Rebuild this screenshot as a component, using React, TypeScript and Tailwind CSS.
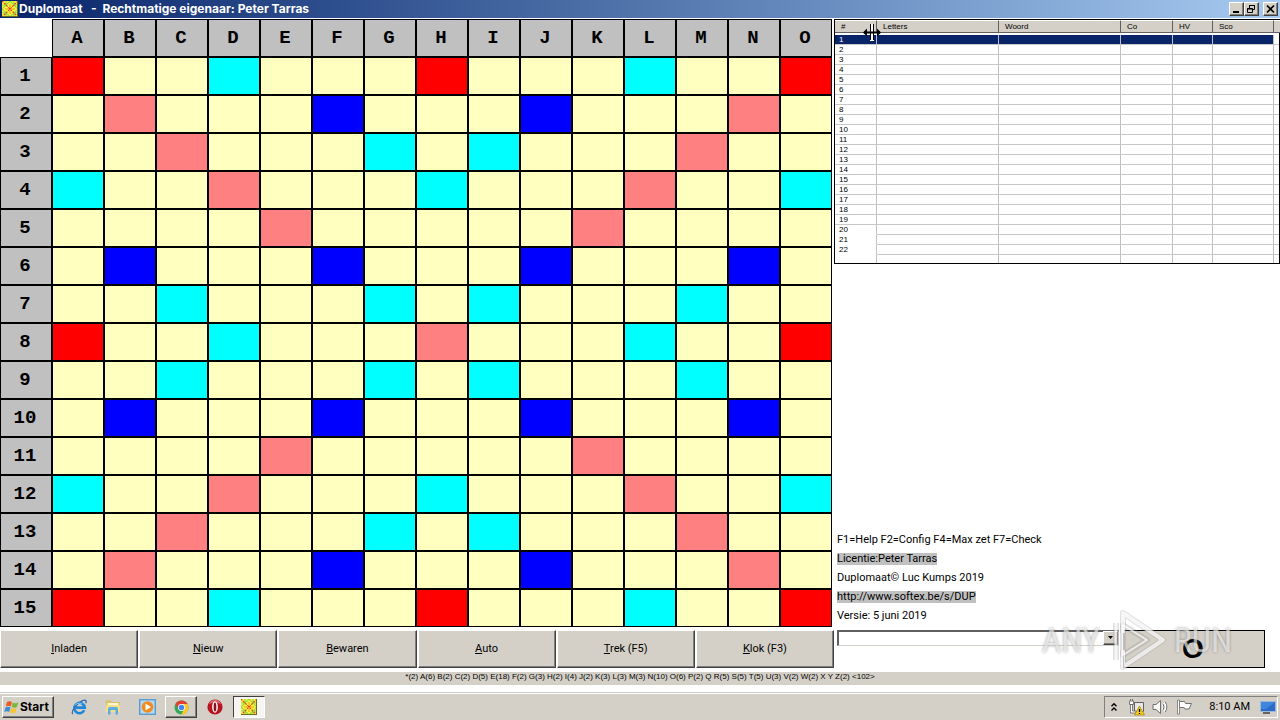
import React from "react";

const COLUMNS = "ABCDEFGHIJKLMNO".split("");

// r = triple word, p = double word, b = triple letter, c = double letter
const BOARD = [
  "r..c...r...c..r",
  ".p...b...b...p.",
  "..p...c.c...p..",
  "c..p...c...p..c",
  "....p.....p....",
  ".b...b...b...b.",
  "..c...c.c...c..",
  "r..c...p...c..r",
  "..c...c.c...c..",
  ".b...b...b...b.",
  "....p.....p....",
  "c..p...c...p..c",
  "..p...c.c...p..",
  ".p...b...b...p.",
  "r..c...r...c..r",
];

const SQUARE: Record<string, string> = {
  r: "bg-[#ff0000]",
  p: "bg-[#ff8080]",
  b: "bg-[#0000ff]",
  c: "bg-[#00ffff]",
  ".": "bg-[#ffffc0]",
};

const LIST_COLUMNS = [
  { title: "#", width: "w-[42px]" },
  { title: "Letters", width: "w-[122px]" },
  { title: "Woord", width: "w-[122px]" },
  { title: "Co", width: "w-[52px]" },
  { title: "HV", width: "w-[40px]" },
  { title: "Sco", width: "w-[61px]" },
  { title: "", width: "" },
];

const ACTIONS = [
  ["I", "nladen"],
  ["N", "ieuw"],
  ["B", "ewaren"],
  ["A", "uto"],
  ["T", "rek (F5)"],
  ["K", "lok (F3)"],
];

const RAISED =
  "border border-t-white border-l-white border-r-[#404040] border-b-[#404040] bg-[#d4d0c8] shadow-[inset_-1px_-1px_0_#808080]";

function AppIcon() {
  return (
    <svg width="16" height="16" viewBox="0 0 16 16" aria-hidden="true">
      <rect width="16" height="16" fill="#f6f63a" />
      <path d="M0 8l8-8 8 8-8 8zM4 0v4H0M12 0v4h4M4 16v-4H0M12 16v-4h4" fill="none" stroke="#98d848" strokeWidth="1.200" />
      <path d="M0 0l16 16M16 0L0 16" stroke="#e8401c" strokeWidth="1.300" strokeDasharray="2 1" />
      <path d="M8 3v3M8 10v3M3 8h3M10 8h3" stroke="#e89a28" strokeWidth="1" />
      <path d="M0 15.500h16M15.500 0v16" stroke="#6b6b20" strokeWidth="1" />
    </svg>
  );
}

function TitleBar() {
  const control = `flex h-[14px] w-[15px] items-center justify-center ${RAISED}`;
  return (
    <header className="flex h-[18px] items-center bg-linear-to-r from-[#0a246a] to-[#a6caf0] pr-[2px] pl-[2px]">
      <AppIcon />
      <h1 className="ml-[1px] flex-1 font-['Inter',sans-serif] text-[12px] leading-[16px] font-bold whitespace-pre text-white">
        {"Duplomaat   -  Rechtmatige eigenaar: Peter Tarras"}
      </h1>
      <button aria-label="Minimize" className={control}>
        <svg width="11" height="10" viewBox="0 0 11 10"><path d="M2 8h6" stroke="#000" strokeWidth="2" /></svg>
      </button>
      <button aria-label="Restore" className={control}>
        <svg width="11" height="10" viewBox="0 0 11 10" fill="none" stroke="#000">
          <path d="M3.500 4V1.500h5v4H7M3 1.500h6M1.500 4.500h5v4h-5zM1 5h6" />
        </svg>
      </button>
      <button aria-label="Close" className={`ml-[4px] ${control}`}>
        <svg width="11" height="10" viewBox="0 0 11 10"><path d="M2 1.500l7 7M9 1.500l-7 7" stroke="#000" strokeWidth="1.700" /></svg>
      </button>
    </header>
  );
}

function Board() {
  const heading = "h-[38px] border border-black bg-[#c0c0c0] p-0 pr-[2px] pb-[1px] text-center align-middle";
  return (
    <table className="w-full table-fixed border-separate border-spacing-0 font-['Liberation_Mono',monospace] text-[19px] leading-[20px] font-bold text-black">
      <thead>
        <tr>
          <td className="h-[38px] p-0" />
          {COLUMNS.map((c) => (
            <th key={c} scope="col" className={heading}>{c}</th>
          ))}
        </tr>
      </thead>
      <tbody>
        {BOARD.map((row, r) => (
          <tr key={r}>
            <th scope="row" className={heading}>{r + 1}</th>
            {row.split("").map((s, c) => (
              <td key={c} className={`h-[38px] border border-black p-0 ${SQUARE[s]}`} />
            ))}
          </tr>
        ))}
      </tbody>
    </table>
  );
}

function MoveList() {
  const rows = Array.from({ length: 22 }, (_, i) => i + 1);
  return (
    <div className="relative border border-black bg-white">
      <table className="w-full table-fixed border-separate border-spacing-0 font-['Liberation_Sans',sans-serif] text-[8px] text-black">
        <thead>
          <tr>
            {LIST_COLUMNS.map((c, i) => (
              <th key={i} scope="col" className={`h-[15px] border-b-2 border-b-white p-0 text-left font-normal ${c.width}`}>
                <div className="h-[13px] border-t border-r border-b border-t-white border-r-[#606060] border-b-[#606060] bg-[#d4d0c8] pl-[6px] leading-[11px]">
                  {c.title}
                </div>
              </th>
            ))}
          </tr>
        </thead>
        <tbody>
          {rows.map((n) => (
            <tr key={n}>
              {LIST_COLUMNS.map((_, i) => {
                const line = i === 0 && n > 19 ? "border-b-white" : "border-b-[#c8c8c8]";
                const fill = n === 1 && i < 6 ? "bg-[#0a246a] text-white" : "";
                const edge = i < 6 ? "border-r border-r-[#c0c0c0]" : "";
                return (
                  <td key={i} className={`h-[10px] border-b p-0 pl-[4px] leading-[9px] ${line} ${fill} ${edge}`}>
                    {i === 0 ? n : null}
                  </td>
                );
              })}
            </tr>
          ))}
          <tr>
            {LIST_COLUMNS.map((_, i) => (
              <td key={i} className={`h-[8px] p-0 ${i < 6 ? "border-r border-r-[#c0c0c0]" : ""}`} />
            ))}
          </tr>
        </tbody>
      </table>
      <svg className="pointer-events-none absolute top-[3px] left-[28px]" width="18" height="20" viewBox="0 0 18 20" aria-hidden="true">
        <path d="M7 1h4v17H7z" fill="#fff" />
        <path d="M7.500 1v16M10.500 1v16" stroke="#000" strokeWidth="1" />
        <path d="M1 9.500h16" stroke="#000" strokeWidth="2" />
        <path d="M0 9.500L4 5.500v8zM18 9.500l-4-4v8z" fill="#000" />
      </svg>
    </div>
  );
}

function Info() {
  return (
    <div className="flex flex-col items-start gap-[7px] pl-[3px] text-[11px] leading-[12px] text-black">
      <p>F1=Help F2=Config F4=Max zet F7=Check</p>
      <p className="bg-[#c0c0c0]">Licentie:Peter Tarras</p>
      <p>Duplomaat© Luc Kumps 2019</p>
      <a href="http://www.softex.be/s/DUP" className="bg-[#c0c0c0]">http://www.softex.be/s/DUP</a>
      <p>Versie: 5 juni 2019</p>
    </div>
  );
}

function Watermark() {
  const word =
    "font-['Roboto_Condensed','Liberation_Sans_Narrow',Roboto,sans-serif] text-[34px] leading-[34px] text-white/60 [text-shadow:0_0_3px_rgba(100,100,100,0.6)]";
  return (
    <div className="pointer-events-none absolute -top-[22px] right-[48px] flex items-center gap-[8px]" aria-hidden="true">
      <span className={word}>ANY</span>
      <svg width="58" height="64" viewBox="0 0 58 64" fill="none" strokeLinejoin="round">
        <g stroke="#8c8c8c" strokeOpacity=".28" strokeWidth="6">
          <path d="M15 25V5l40 27-40 27V42" />
          <path d="M15 17v30l24-15z" />
          <path d="M8 15v37" />
        </g>
        <g stroke="#fff" strokeOpacity=".7" strokeWidth="4">
          <path d="M15 25V5l40 27-40 27V42" />
          <path d="M15 17v30l24-15z" strokeWidth="2" />
          <path d="M8 15v37" strokeWidth="3" />
        </g>
      </svg>
      <span className={word}>RUN</span>
    </div>
  );
}

function EntryRow() {
  return (
    <div className="relative flex h-[38px] items-start gap-[4px] pr-[15px] pl-[3px]">
      <div className="relative flex-1">
        <select
          aria-label="Woord"
          className="block h-[16px] w-full appearance-none border border-t-2 border-l-2 border-t-[#606060] border-r-[#d4d0c8] border-b-[#d4d0c8] border-l-[#606060] bg-white text-[11px]"
        >
          <option></option>
        </select>
        <span className={`pointer-events-none absolute top-[1px] right-[1px] flex h-[14px] w-[15px] items-center justify-center ${RAISED}`}>
          <svg width="7" height="4" viewBox="0 0 7 4"><path d="M1 0h5L3.500 3z" fill="#000" /></svg>
        </span>
      </div>
      <button className="h-[38px] w-[142px] border border-black bg-[#d4d0c8] pr-[2px] font-['Liberation_Sans',sans-serif] text-[28px] leading-[32px] font-bold text-black">
        O
      </button>
      <Watermark />
    </div>
  );
}

function IeIcon() {
  return (
    <svg width="17" height="16" viewBox="0 0 17 16" fill="none">
      <path d="M13.200 11.300A5.200 5.200 0 1 1 13.700 8.600H5" stroke="#1c86d8" strokeWidth="2.600" />
      <path d="M1.800 15C-.5 12.500 6 4 11.500 1.600c3.500-1.400 4.200.2 3.200 2.600" stroke="#2b6cb8" strokeWidth="1.300" />
      <path d="M4 6.500a5 5 0 0 1 7-1.600" stroke="#8fd3f8" strokeWidth="1" />
    </svg>
  );
}

function FolderIcon() {
  return (
    <svg width="16" height="16" viewBox="0 0 16 16">
      <path d="M1 1.500h5l1 1.500h8v10H1z" fill="#dcc068" />
      <path d="M2.500 4h11v5h-11z" fill="#fff7d0" />
      <path d="M1 6h14v7H1z" fill="#f4de8c" />
      <path d="M3 15.500V10q0-2 2-2h6q2 0 2 2v5.500h-2.500V11h-5v4.500z" fill="#58aee0" />
    </svg>
  );
}

function PlayerIcon() {
  return (
    <svg width="17" height="16" viewBox="0 0 17 16">
      <rect x=".7" y=".7" width="15.600" height="14.600" fill="#b4d8f4" stroke="#5a9cd0" strokeWidth="1.400" />
      <circle cx="8.500" cy="8" r="5.800" fill="#f48a1c" />
      <path d="M6.500 4.500l5.500 3.500-5.500 3.500z" fill="#fff" />
    </svg>
  );
}

function ChromeIcon() {
  return (
    <svg width="15" height="15" viewBox="0 0 16 16">
      <circle cx="8" cy="8" r="7.500" fill="#34a853" />
      <path d="M1.500 4.250A7.500 7.500 0 0 1 14.500 4.250L8 5 5 9.800z" fill="#e04030" />
      <path d="M14.500 4.250A7.500 7.500 0 0 1 7.600 15.500L11 9.700 8 4.300z" fill="#fbc82c" />
      <circle cx="8" cy="8" r="3.700" fill="#fff" />
      <circle cx="8" cy="8" r="2.900" fill="#4285f4" />
    </svg>
  );
}

function OperaIcon() {
  return (
    <svg width="16" height="16" viewBox="0 0 16 16">
      <circle cx="8" cy="8" r="7.600" fill="#b81420" />
      <path d="M2 5a6.500 6.500 0 0 1 12 0q-6-3-12 0z" fill="#dc6a6a" />
      <ellipse cx="8" cy="8" rx="2.900" ry="5.800" fill="#f6f0f0" />
      <ellipse cx="8" cy="8" rx="1.300" ry="4.600" fill="#8c1018" />
    </svg>
  );
}

function Taskbar() {
  const slot = "flex h-[22px] w-8 items-center justify-center";
  return (
    <footer className="mt-[7px] border-t border-[#c8c8c8] font-['Roboto',sans-serif]">
      <div className="flex items-center border-t border-white bg-[#d4d0c8] px-[2px] pt-[2px] pb-[2px]">
        <button className={`flex h-[22px] w-[52px] items-center pl-[1px] font-['Inter',sans-serif] text-[12px] leading-[18px] font-bold text-black ${RAISED}`}>
          <svg width="16" height="16" viewBox="0 0 16 16" className="shrink-0" aria-hidden="true">
            <path d="M3 3q2.500-1.700 5 0L6.800 7.500q-2.500-1.500-5 0z" fill="#ec5a24" />
            <path d="M8.800 3.500q2.500 1.400 5.500-.2L13 8q-2.500 1.400-5.300 0z" fill="#7cb83c" />
            <path d="M1.500 8.500q2.500-1.500 5 0L5.200 13q-2.500-1.500-5 0z" fill="#3c8cd8" />
            <path d="M7.400 9q2.500 1.400 5.300 0l-1.300 4.600q-2.600 1.400-5.300 0z" fill="#f8c42c" />
          </svg>
          Start
        </button>
        <nav aria-label="Taskbar" className="ml-[9px] flex flex-1 gap-[2px]">
          <button aria-label="Internet Explorer" className={slot}><IeIcon /></button>
          <button aria-label="Windows Explorer" className={slot}><FolderIcon /></button>
          <button aria-label="Media Player" className={slot}><PlayerIcon /></button>
          <button aria-label="Chrome" className={`${slot} ${RAISED}`}><ChromeIcon /></button>
          <button aria-label="Opera" className={slot}><OperaIcon /></button>
          <button aria-label="Duplomaat" className={`${slot} border border-t-[#404040] border-r-white border-b-white border-l-[#404040] bg-[#f6f5f2]`}>
            <AppIcon />
          </button>
        </nav>
        <div className="flex h-[22px] items-center border border-t-[#808080] border-r-white border-b-white border-l-[#808080] pr-[1px] pl-[5px] text-[11px] leading-[14px] text-black">
          <svg width="8" height="10" viewBox="0 0 8 10" fill="none" stroke="#000" strokeWidth="1.400" aria-hidden="true">
            <path d="M1.500 4.200L4 1.700l2.500 2.500M1.500 8.500L4 6l2.500 2.500" />
          </svg>
          <svg className="ml-[10px]" width="17" height="17" viewBox="0 0 17 17" aria-hidden="true">
            <path d="M6.500 3.500h9v9h-9z" fill="#e8e8e4" stroke="#606060" />
            <path d="M2.500 0v2M4.500 0v2M1.500 2h4v3.500h-4zM2.500 5.500h2V12H8v2H2.500z" fill="#fff" stroke="#606060" strokeWidth=".8" />
            <path d="M11.500 7l5 9h-10z" fill="#f4cc1c" stroke="#a08010" strokeWidth=".7" />
            <path d="M11.500 10v3M11.500 14v1" stroke="#000" strokeWidth="1.300" />
          </svg>
          <svg className="ml-[7px]" width="17" height="16" viewBox="0 0 17 16" fill="none" stroke="#707070" aria-hidden="true">
            <path d="M1 5.500h3L8.500 1.500v13L4 10.500H1z" fill="#f8f8f8" />
            <path d="M10.500 5q2 3 0 6M12.500 3.500q3 4.500 0 9" stroke="#fff" strokeWidth="2" />
            <path d="M11 5q2 3 0 6M13.300 3q3.200 5 0 10" />
          </svg>
          <svg className="ml-[7px]" width="17" height="16" viewBox="0 0 17 16" aria-hidden="true">
            <path d="M3.500 2.500h5l1 2h6l-2.500 5.500h-4l-1-1.500h-4.500z" fill="#fff" stroke="#707070" />
            <path d="M1.500 1h2v14h-2z" fill="#fff" stroke="#707070" strokeWidth=".8" />
          </svg>
          <time className="ml-[16px] whitespace-nowrap">8:10 AM</time>
          <svg className="ml-[10px]" width="16" height="14" viewBox="0 0 16 14" aria-hidden="true">
            <rect x=".5" y="1.500" width="15" height="10" fill="#2c6cc8" stroke="#9cb8d8" />
            <path d="M1 2h14L6 9H1z" fill="#3f86dc" />
            <path d="M3 13h7" stroke="#404040" strokeWidth="1.500" />
          </svg>
        </div>
      </div>
    </footer>
  );
}

export default function App() {
  return (
    <div className="flex min-h-screen flex-col bg-white font-['Roboto',sans-serif]">
      <TitleBar />
      <main className="grid grid-cols-[834fr_446fr] pt-[1px] pb-[4px]">
        <section className="flex flex-col gap-[3px]">
          <div className="pr-[2px]">
            <Board />
          </div>
          <div className="grid h-[38px] grid-cols-6 gap-x-px text-[11px] leading-[14px] text-black">
            {ACTIONS.map(([key, rest]) => (
              <button key={key} className={RAISED}>
                <u>{key}</u>
                {rest}
              </button>
            ))}
          </div>
        </section>
        <section className="flex flex-col">
          <MoveList />
          <div className="flex flex-1 flex-col justify-end gap-[8px]">
            <Info />
            <EntryRow />
          </div>
        </section>
      </main>
      <div className="h-[13px] bg-[#d4d0c8] text-center font-['Liberation_Sans',sans-serif] text-[8px] leading-[9px] text-black">
        *(2) A(6) B(2) C(2) D(5) E(18) F(2) G(3) H(2) I(4) J(2) K(3) L(3) M(3) N(10) O(6) P(2) Q R(5) S(5) T(5) U(3) V(2) W(2) X Y Z(2) &lt;102&gt;
      </div>
      <Taskbar />
    </div>
  );
}
